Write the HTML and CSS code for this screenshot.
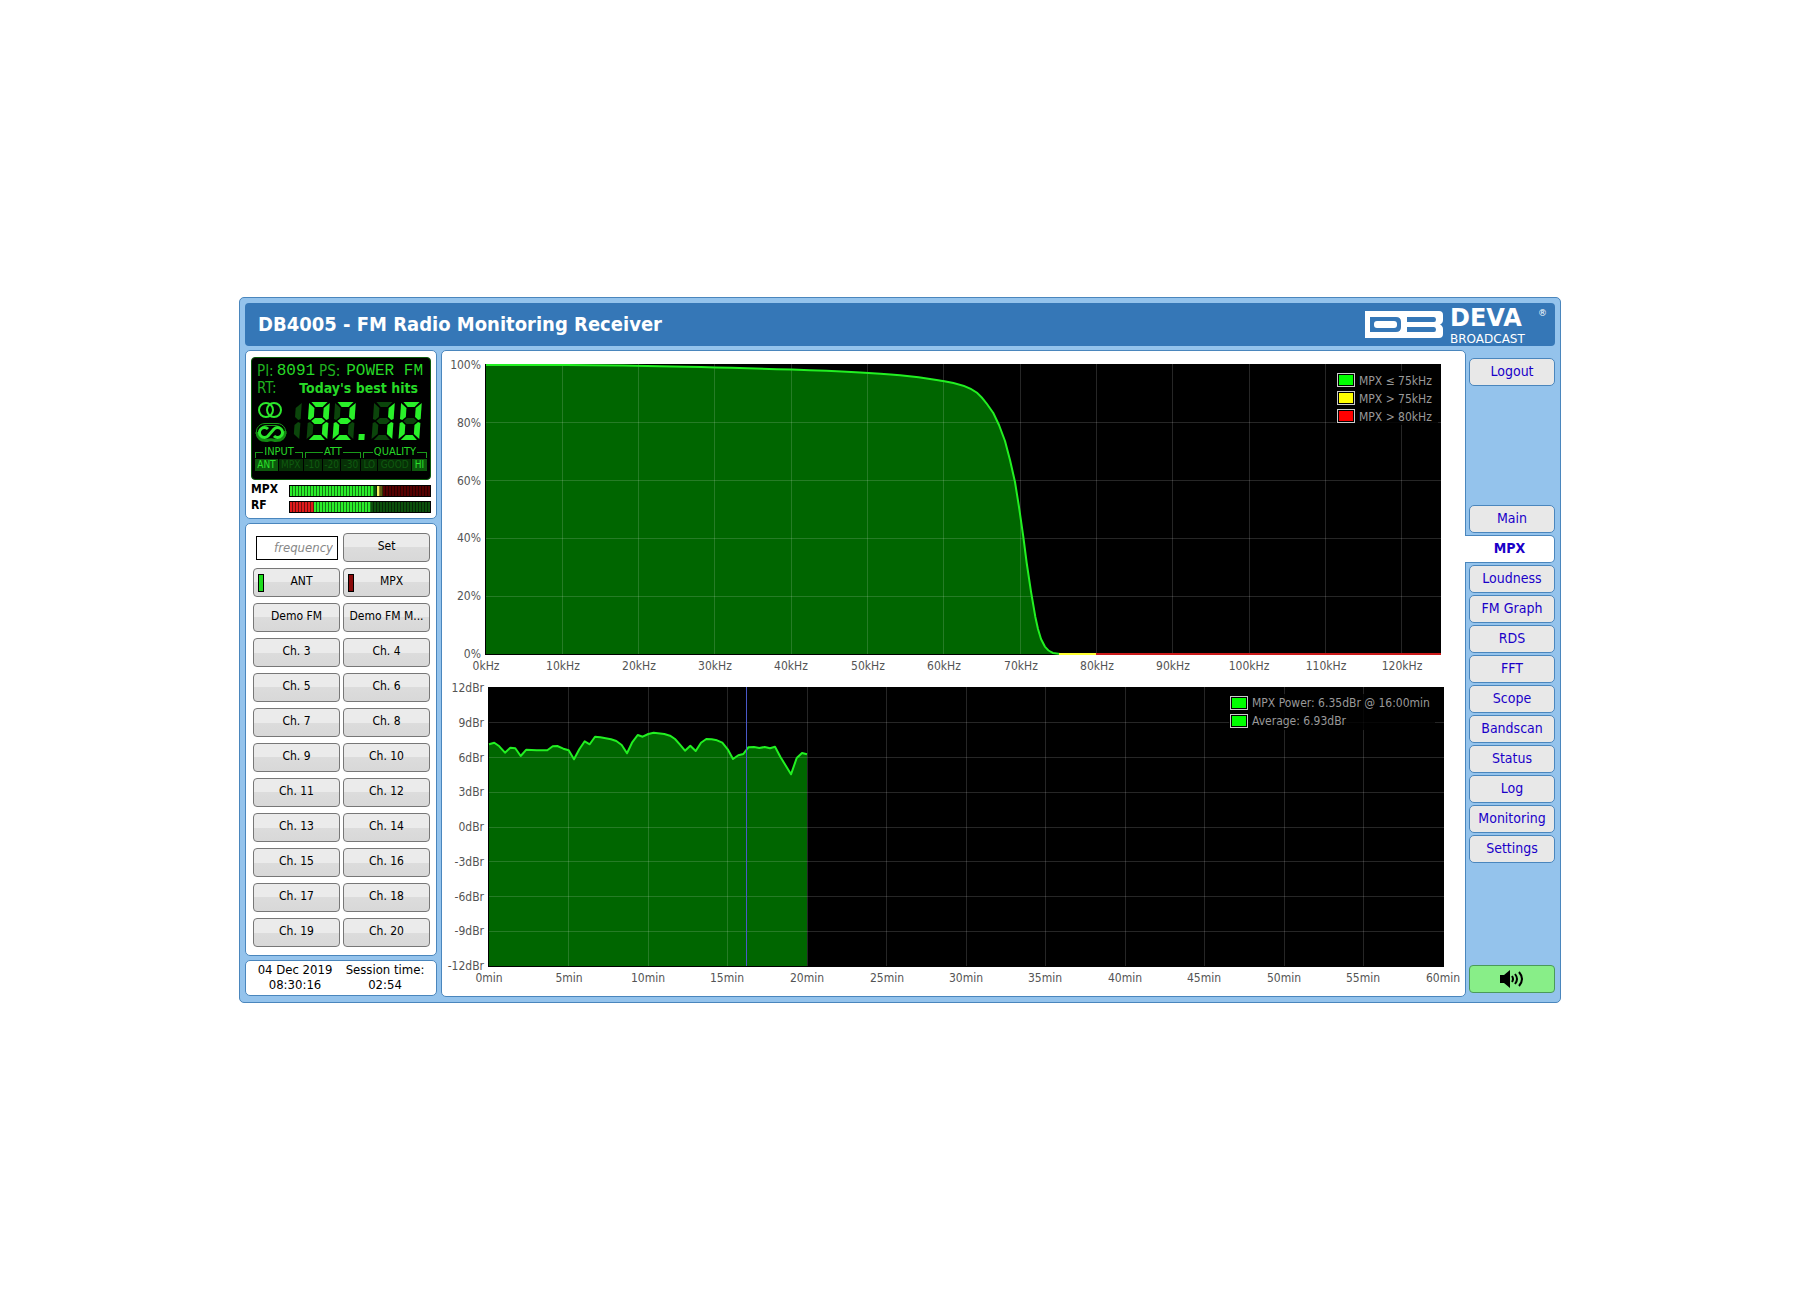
FILE: index.html
```
<!DOCTYPE html>
<html lang="en">
<head>
<meta charset="utf-8">
<title>DB4005 - FM Radio Monitoring Receiver</title>
<link rel="stylesheet" href="styles.css">
</head>
<body>
<div class="frame">
  <header class="header">
    <h1 class="title">DB4005 - FM Radio Monitoring Receiver</h1>
    <div class="logo">
      <svg class="logo-mark" viewBox="0 0 78 27" aria-hidden="true">
        <path fill="#fff" fill-rule="evenodd" d="M0 0H74Q78 0 78 4V9Q78 12 75 13.500Q78 15 78 18V23Q78 27 74 27H0ZM5 6V21H31Q36 21 36 16V11Q36 6 31 6ZM42 6V11H69Q71 11 71 8.500T69 6ZM42 16V21H69Q71 21 71 18.500T69 16Z"/>
        <rect x="9" y="10" width="23" height="7" rx="3" fill="#fff"/>
      </svg>
      <div class="logo-text">
        <span class="logo-name">DEVA<sup class="logo-reg">®</sup></span>
        <span class="logo-sub">BROADCAST</span>
      </div>
    </div>
  </header>

  <div class="body">
    <div class="side">
      <section class="panel status">
        <div class="lcd">
          <div class="lcd-row"><span class="lcd-key">PI:</span><span class="lcd-pi">8091</span><span class="lcd-key lcd-ps-key">PS:</span><span class="lcd-ps">POWER FM</span></div>
          <div class="lcd-row"><span class="lcd-key">RT:</span><span class="lcd-rt">Today's best hits</span></div>
          <svg class="lcd-freq" viewBox="0 0 172 42" role="img" aria-label="92.10 MHz, stereo, RDS">
            <defs>
              <path id="sa" d="M3 0H17L13 5H7Z"/>
              <path id="sb" d="M19 1V17L17 18L14 15V6Z"/>
              <path id="sc" d="M19 21V37L14 32V23L17 20Z"/>
              <path id="sd" d="M3 38H17L13 33H7Z"/>
              <path id="se" d="M1 21V37L6 32V23L3 20Z"/>
              <path id="sf" d="M1 1V17L3 18L6 15V6Z"/>
              <path id="sg" d="M4 19L7 16H13L16 19L13 22H7Z"/>
            </defs>
            <g fill="none" stroke="#2ce82c" stroke-width="2">
              <circle cx="11" cy="9" r="7"/><circle cx="19" cy="9" r="7"/>
            </g>
            <g fill="none">
              <path stroke="#1a9a1a" stroke-width="1" d="M3 37A9 9 0 0 1 10 22.500H22A9 9 0 0 1 29 37M5 33A6.500 6.500 0 0 1 10 24.500H21A7 7 0 0 1 27 34"/>
              <path stroke="#128a12" stroke-width="3" d="M2 31Q3 40 12 39.500Q16 38 20 39.500Q30 40 30 30"/>
              <path stroke="#2ce82c" stroke-width="3" d="M13 28A5 5 0 1 0 13 35L19 28A5 5 0 1 1 19 35"/>
            </g>
            <g transform="translate(53 1) skewX(-4)">
              <g transform="translate(-28 0) scale(1.150 1)" fill="#0b450b"><use href="#sb"/><use href="#sc"/></g>
              <g transform="translate(0 0) scale(1.150 1)" fill="#29f029"><use href="#sa"/><use href="#sb"/><use href="#sc"/><use href="#sd"/><use href="#sf"/><use href="#sg"/><use href="#se" fill="#0b450b"/></g>
              <g transform="translate(26 0) scale(1.150 1)" fill="#29f029"><use href="#sa"/><use href="#sb"/><use href="#sg"/><use href="#se"/><use href="#sd"/><use href="#sf" fill="#0b450b"/><use href="#sc" fill="#0b450b"/></g>
              <rect x="53" y="32" width="6" height="6" fill="#29f029"/>
              <g transform="translate(65 0) scale(1.150 1)" fill="#0b450b"><use href="#sa"/><use href="#sg"/><use href="#se"/><use href="#sd"/><use href="#sf"/><g fill="#29f029"><use href="#sb"/><use href="#sc"/></g></g>
              <g transform="translate(92 0) scale(1.150 1)" fill="#29f029"><use href="#sa"/><use href="#sb"/><use href="#sc"/><use href="#sd"/><use href="#se"/><use href="#sf"/><use href="#sg" fill="#0b450b"/></g>
            </g>
          </svg>
          <div class="lcd-scale">
            <div class="lcd-legend">INPUT</div>
            <div class="lcd-legend">ATT</div>
            <div class="lcd-legend">QUALITY</div>
          </div>
          <div class="lcd-cells">
            <span class="cell cell-on">ANT</span><span class="cell">MPX</span><span class="cell">-10</span><span class="cell">-20</span><span class="cell">-30</span><span class="cell">LO</span><span class="cell">GOOD</span><span class="cell cell-on">HI</span>
          </div>
        </div>
        <div class="level"><span class="level-name">MPX</span><span class="bar bar-mpx"></span></div>
        <div class="level"><span class="level-name">RF</span><span class="bar bar-rf"></span></div>
      </section>

      <section class="panel channels">
        <input class="freq" type="text" placeholder="frequency" aria-label="Frequency">
        <button class="btn">Set</button>
        <button class="btn btn-led"><span class="led led-on"></span><span class="btn-label">ANT</span></button>
        <button class="btn btn-led"><span class="led"></span><span class="btn-label">MPX</span></button>
        <button class="btn">Demo FM</button><button class="btn">Demo FM M...</button>
        <button class="btn">Ch. 3</button><button class="btn">Ch. 4</button>
        <button class="btn">Ch. 5</button><button class="btn">Ch. 6</button>
        <button class="btn">Ch. 7</button><button class="btn">Ch. 8</button>
        <button class="btn">Ch. 9</button><button class="btn">Ch. 10</button>
        <button class="btn">Ch. 11</button><button class="btn">Ch. 12</button>
        <button class="btn">Ch. 13</button><button class="btn">Ch. 14</button>
        <button class="btn">Ch. 15</button><button class="btn">Ch. 16</button>
        <button class="btn">Ch. 17</button><button class="btn">Ch. 18</button>
        <button class="btn">Ch. 19</button><button class="btn">Ch. 20</button>
      </section>

      <section class="panel clock">
        <div>04 Dec 2019<br>08:30:16</div>
        <div>Session time:<br>02:54</div>
      </section>
    </div>

    <main class="panel charts">
      <svg class="chart" viewBox="0 0 1023 328" role="img" aria-label="MPX deviation distribution">
        <g transform="translate(44 13)">
          <rect x="-1" y="0" width="956" height="291"/>
          <path fill="#006600" d="M0 1H80C150 1 254 4 306 5.500C350 7 390 9 414 11.300C435 13 445 15 457 17C470 19 482 22 491 28.700Q496 33 501 40L507.300 49L513 61L519 77L524 96L529 118L533 143L537.300 172.700L540.700 199L545 227.700L549.300 252.700L552 265L555 275L559 282.700Q562 287 567 289L574 290H0Z"/>
          <path class="grid" d="M76.500 0V290M152.500 0V290M228.500 0V290M305.500 0V290M381.500 0V290M457.500 0V290M534.500 0V290M610.500 0V290M686.500 0V290M763.500 0V290M839.500 0V290M915.500 0V290M0 58.500H955M0 116.500H955M0 174.500H955M0 232.500H955"/>
          <path class="trace" d="M0 1H80C150 1 254 4 306 5.500C350 7 390 9 414 11.300C435 13 445 15 457 17C470 19 482 22 491 28.700Q496 33 501 40L507.300 49L513 61L519 77L524 96L529 118L533 143L537.300 172.700L540.700 199L545 227.700L549.300 252.700L552 265L555 275L559 282.700Q562 287 567 289L574 290"/>
          <path stroke="#ffff33" stroke-width="2" d="M573 290H611"/>
          <path stroke="#cc1a1a" stroke-width="2" d="M610 290H955"/>
          <g class="labels-y">
            <text x="-5" y="5">100%</text><text x="-5" y="63">80%</text><text x="-5" y="121">60%</text><text x="-5" y="178">40%</text><text x="-5" y="236">20%</text><text x="-5" y="294">0%</text>
          </g>
          <g class="labels-x">
            <text x="0" y="306">0kHz</text><text x="77" y="306">10kHz</text><text x="153" y="306">20kHz</text><text x="229" y="306">30kHz</text><text x="305" y="306">40kHz</text><text x="382" y="306">50kHz</text><text x="458" y="306">60kHz</text><text x="535" y="306">70kHz</text><text x="611" y="306">80kHz</text><text x="687" y="306">90kHz</text><text x="763" y="306">100kHz</text><text x="840" y="306">110kHz</text><text x="916" y="306">120kHz</text>
          </g>
          <rect x="850" y="7" width="102" height="54" fill-opacity=".8"/>
          <g class="keys">
            <rect x="851.500" y="9.500" width="17" height="13"/><rect x="851.500" y="27.500" width="17" height="13"/><rect x="851.500" y="45.500" width="17" height="13"/>
          </g>
          <rect x="853" y="11" width="14" height="10" fill="#0f0"/><rect x="853" y="29" width="14" height="10" fill="#ff0"/><rect x="853" y="47" width="14" height="10" fill="#f00"/>
          <g class="key-text">
            <text x="873" y="21">MPX ≤ 75kHz</text><text x="873" y="39">MPX &gt; 75kHz</text><text x="873" y="57">MPX &gt; 80kHz</text>
          </g>
        </g>
      </svg>
      <svg class="chart" viewBox="0 0 1023 317" role="img" aria-label="MPX power over time">
        <g transform="translate(47 8)">
          <rect x="-1" y="0" width="956" height="280"/>
          <path fill="#006600" d="M0 57.300L5.300 55.700L10.300 59.300L16 65.700L21.300 60.700L26.300 61.300L31.700 69L37.300 62.700L47.700 63.300H58.300L63.700 59.300L68.300 59L74.300 61.700L79.700 63.300L85 72.300L90.300 62.300L95.700 54.300L100.700 57.300L106 49.700L111.300 50.300L116.700 51.300L122 52.300L127.300 54L132.700 58L138 66.300L143 55.700L148.700 48L153.700 49.700L159.300 47L164.700 45.700L175.300 47L181 48.700L186 52L191 57.700L196 63.700L201.300 58.700L206.700 64L212 55.700L217.300 52L222.700 52.300L228 53.300L233.300 55.700L238.700 62.300L244 72L249.300 68.300L254.300 67L259.300 60.300L265 60L270.300 61L275.700 60L281 61.300L286 59.700L291.300 69.700L302 87.300L307.700 71L313 66L318 67.300V279H0Z"/>
          <path class="grid" d="M79.500 0V279M159.500 0V279M238.500 0V279M318.500 0V279M397.500 0V279M477.500 0V279M556.500 0V279M636.500 0V279M715.500 0V279M795.500 0V279M874.500 0V279M0 35.500H955M0 70.500H955M0 105.500H955M0 140.500H955M0 174.500H955M0 209.500H955M0 244.500H955"/>
          <path class="trace" d="M0 57.300L5.300 55.700L10.300 59.300L16 65.700L21.300 60.700L26.300 61.300L31.700 69L37.300 62.700L47.700 63.300H58.300L63.700 59.300L68.300 59L74.300 61.700L79.700 63.300L85 72.300L90.300 62.300L95.700 54.300L100.700 57.300L106 49.700L111.300 50.300L116.700 51.300L122 52.300L127.300 54L132.700 58L138 66.300L143 55.700L148.700 48L153.700 49.700L159.300 47L164.700 45.700L175.300 47L181 48.700L186 52L191 57.700L196 63.700L201.300 58.700L206.700 64L212 55.700L217.300 52L222.700 52.300L228 53.300L233.300 55.700L238.700 62.300L244 72L249.300 68.300L254.300 67L259.300 60.300L265 60L270.300 61L275.700 60L281 61.300L286 59.700L291.300 69.700L302 87.300L307.700 71L313 66L318 67.300"/>
          <path stroke="#4a58c8" d="M257.500 0V279"/>
          <g class="labels-y">
            <text x="-5" y="5">12dBr</text><text x="-5" y="40">9dBr</text><text x="-5" y="75">6dBr</text><text x="-5" y="109">3dBr</text><text x="-5" y="144">0dBr</text><text x="-5" y="179">-3dBr</text><text x="-5" y="214">-6dBr</text><text x="-5" y="248">-9dBr</text><text x="-5" y="283">-12dBr</text>
          </g>
          <g class="labels-x">
            <text x="0" y="295">0min</text><text x="80" y="295">5min</text><text x="159" y="295">10min</text><text x="238" y="295">15min</text><text x="318" y="295">20min</text><text x="398" y="295">25min</text><text x="477" y="295">30min</text><text x="556" y="295">35min</text><text x="636" y="295">40min</text><text x="715" y="295">45min</text><text x="795" y="295">50min</text><text x="874" y="295">55min</text><text x="954" y="295">60min</text>
          </g>
          <rect x="740" y="7" width="206" height="36" fill-opacity=".8"/>
          <g class="keys">
            <rect x="741.500" y="9.500" width="17" height="13"/><rect x="741.500" y="27.500" width="17" height="13"/>
          </g>
          <rect x="743" y="11" width="14" height="10" fill="#0f0"/><rect x="743" y="29" width="14" height="10" fill="#0f0"/>
          <g class="key-text">
            <text x="763" y="20">MPX Power: 6.35dBr @ 16:00min</text><text x="763" y="38">Average: 6.93dBr</text>
          </g>
        </g>
      </svg>
    </main>

    <nav class="nav">
      <a class="tab tab-logout" href="#logout">Logout</a>
      <a class="tab" href="#main">Main</a>
      <a class="tab tab-active" href="#mpx">MPX</a>
      <a class="tab" href="#loudness">Loudness</a>
      <a class="tab" href="#fmgraph">FM Graph</a>
      <a class="tab" href="#rds">RDS</a>
      <a class="tab" href="#fft">FFT</a>
      <a class="tab" href="#scope">Scope</a>
      <a class="tab" href="#bandscan">Bandscan</a>
      <a class="tab" href="#status">Status</a>
      <a class="tab" href="#log">Log</a>
      <a class="tab" href="#monitoring">Monitoring</a>
      <a class="tab" href="#settings">Settings</a>
      <button class="sound" aria-label="Audio">
        <svg width="26" height="18" viewBox="0 0 26 18" aria-hidden="true">
          <path d="M1 5H5L11 0V18L5 13H1Z"/>
          <path fill="none" stroke="#000" stroke-width="2" d="M13 6Q15 9 13 12M16 4Q20 9 16 14M20 2Q26 9 20 16"/>
        </svg>
      </button>
    </nav>
  </div>
</div>
</body>
</html>
```
FILE: styles.css
```
* { box-sizing: border-box; }

body {
  margin: 0;
  min-height: 100vh;
  display: flex;
  align-items: center;
  justify-content: center;
  background: #fff;
  color: #000;
  font-family: "DejaVu Sans Condensed", "DejaVu Sans", sans-serif;
  font-size: 12px;
}

.frame {
  width: 100%;
  max-width: 1322px;
  padding: 5px;
  display: flex;
  flex-direction: column;
  gap: 4px;
  background: #94c3ec;
  border: 1px solid #4a86bd;
  border-radius: 5px;
}

/* header */
.header {
  height: 43px;
  padding: 0 8px 0 13px;
  display: flex;
  align-items: center;
  justify-content: space-between;
  background: #3577b7;
  border-radius: 4px;
  color: #fff;
}
.title {
  margin: 0;
  padding-bottom: 2px;
  font-size: 20px;
  line-height: 24px;
  font-weight: 700;
}
.logo { display: flex; align-items: center; gap: 7px; }
.logo-mark { width: 78px; height: 27px; }
.logo-text {
  width: 97px;
  display: flex;
  flex-direction: column;
  font-family: "DejaVu Sans", sans-serif;
}
.logo-name {
  display: flex;
  justify-content: space-between;
  font-size: 24px;
  line-height: 28px;
  font-weight: 700;
}
.logo-reg { font-size: 9px; line-height: 18px; font-weight: 400; }
.logo-sub { font-size: 12px; line-height: 14px; }

/* columns */
.body {
  display: grid;
  grid-template-columns: 192px minmax(0, 1fr) 89px;
}
.side { display: flex; flex-direction: column; gap: 4px; }
.panel {
  background: #fff;
  border: 1px solid #4a86bd;
  border-radius: 5px;
}

/* receiver display */
.status { padding: 6px 5px 3px; }
.lcd {
  height: 123px;
  margin-bottom: 3px;
  padding: 5px 3px 4px;
  background: #000;
  border: 1px solid #0a5a0a;
  border-radius: 4px;
  color: #27d827;
}
.lcd-row {
  height: 17px;
  padding: 0 4px 0 2px;
  display: flex;
  align-items: center;
  line-height: 17px;
  white-space: nowrap;
}
.lcd-key { font-size: 15px; color: #1fae1f; }
.lcd-pi, .lcd-ps { font-family: "Liberation Mono", monospace; font-size: 16px; }
.lcd-pi { margin-left: 3px; }
.lcd-ps-key { margin-left: 4px; }
.lcd-ps { margin-left: auto; }
.lcd-rt { margin: 0 5px 0 auto; font-size: 14px; font-weight: 700; }
.lcd-freq { display: block; width: 100%; height: 42px; margin-top: 4px; }
.lcd-scale {
  margin-top: 3px;
  display: grid;
  grid-template-columns: 48px 56px 1fr;
  gap: 2px;
}
.lcd-legend {
  display: flex;
  align-items: center;
  gap: 1px;
  height: 12px;
  font-size: 11px;
  line-height: 12px;
}
.lcd-legend::before, .lcd-legend::after {
  content: "";
  flex: 1;
  height: 5px;
  margin-top: 5px;
  border-top: 1px solid #1a9a1a;
}
.lcd-legend::before { border-left: 1px solid #1a9a1a; }
.lcd-legend::after { border-right: 1px solid #1a9a1a; }
.lcd-cells {
  display: grid;
  grid-template-columns: 23fr 24fr 18fr 18fr 19fr 16fr 33fr 15fr;
  gap: 1px;
  margin-top: 1px;
}
.cell {
  height: 12px;
  background: #063006;
  color: #0f5a0f;
  font-size: 10px;
  line-height: 12px;
  text-align: center;
}
.cell-on { background: #0c5a0c; color: #2be02b; }

.level {
  height: 16px;
  display: flex;
  align-items: center;
  justify-content: space-between;
}
.level-name { margin-top: -3px; font-weight: 700; font-size: 12px; line-height: 13px; }
.bar {
  width: 142px;
  height: 12px;
  border: 1px solid #000;
}
.bar-mpx {
  background:
    repeating-linear-gradient(90deg, transparent 0 2px, rgba(0, 0, 0, .5) 2px 3px),
    linear-gradient(90deg, #2bee2b 0 84px, #0c500c 84px 87px, #f8f060 87px 90px, #5a5a10 90px 93px, #500 93px);
}
.bar-rf {
  background:
    repeating-linear-gradient(90deg, transparent 0 2px, rgba(0, 0, 0, .5) 2px 3px),
    linear-gradient(90deg, #e01a1a 0 24px, #2bee2b 24px 81px, #0c500c 81px);
}

/* channel buttons */
.channels {
  padding: 9px 6px 8px 7px;
  display: grid;
  grid-template-columns: 1fr 1fr;
  gap: 6px 3px;
}
.btn {
  height: 29px;
  padding: 0 0 3px;
  border: 1px solid #777;
  border-radius: 4px;
  background: linear-gradient(#ebebeb 0 50%, #dcdcdc 50%, #d8d8d8);
  color: #000;
  font: inherit;
  white-space: nowrap;
}
.freq {
  width: 82px;
  height: 24px;
  margin-left: 3px;
  padding: 0 4px;
  align-self: center;
  border: 1px solid #000;
  font-family: inherit;
  font-size: 13px;
  font-style: italic;
  text-align: right;
}
.freq::placeholder { color: #888; }
.btn-led { display: flex; align-items: center; padding: 0 0 0 4px; }
.btn-label { flex: 1; padding-bottom: 3px; }
.led { width: 6px; height: 18px; border: 1px solid #000; background: #8a0a0a; }
.led-on { background: #1edc1e; }

.clock {
  height: 36px;
  padding-bottom: 2px;
  display: grid;
  grid-template-columns: 98px 82px;
  align-items: center;
  font-size: 13px;
  line-height: 15px;
  text-align: center;
}

/* charts */
.charts { margin-left: 4px; }
.chart { display: block; width: 100%; height: auto; overflow: visible; }
.grid { fill: none; stroke: #fff; stroke-opacity: .15; }
.trace { fill: none; stroke: #22f022; stroke-width: 2; stroke-linejoin: round; }
.labels-x text { text-anchor: middle; fill: #545454; }
.labels-y text { text-anchor: end; fill: #545454; }
.keys rect { fill: #000; stroke: #ccc; }
.key-text text { fill: #999; }

/* right-hand tabs */
.nav {
  padding: 8px 0 4px 3px;
  display: flex;
  flex-direction: column;
  gap: 2px;
}
.tab {
  height: 28px;
  border: 1px solid #4a86bd;
  border-radius: 5px;
  background: #e8e8e8;
  color: #1a00c8;
  font-size: 14px;
  line-height: 25px;
  text-align: center;
  text-decoration: none;
}
.tab-logout { margin-bottom: 117px; }
.tab-active {
  margin-left: -4px;
  border-left: 0;
  border-radius: 0 5px 5px 0;
  background: #fff;
  font-weight: 700;
}
.sound {
  height: 28px;
  margin-top: auto;
  padding: 0;
  display: flex;
  align-items: center;
  justify-content: center;
  border: 1px solid #4a9a5a;
  border-radius: 4px;
  background: #88ee88;
}
```
